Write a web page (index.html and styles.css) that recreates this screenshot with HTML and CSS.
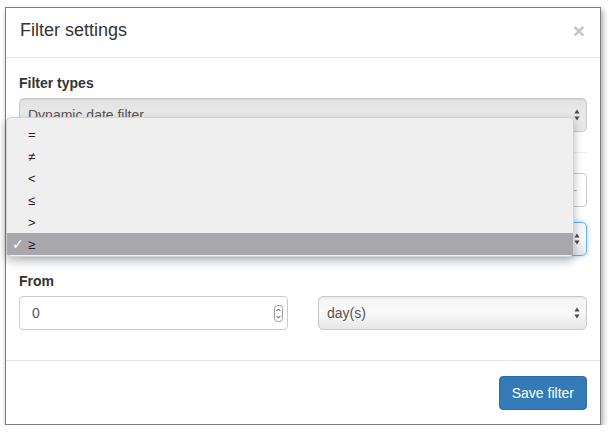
FILE: index.html
```html
<!DOCTYPE html>
<html>
<head>
<meta charset="utf-8">
<link rel="stylesheet" href="styles.css">
</head>
<body>
<div class="stage">
  <div class="modal">
    <div class="modal-header">
      <h4 class="modal-title">Filter settings</h4>
      <span class="close">×</span>
    </div>
    <div class="modal-body">
      <div class="form-group">
        <label class="lbl">Filter types</label>
        <div class="select select-flat">
          <span class="select-text">Dynamic date filter</span>
          <svg class="arrows" width="6" height="12" viewBox="0 0 6 12"><path d="M3 0.5 L5.6 4.5 H0.4 Z M3 11.5 L5.6 7.5 H0.4 Z" fill="#4a4a4a"/></svg>
        </div>
      </div>
      <hr class="sep">
      <div class="form-group">
        <div class="input"><span class="dash">-</span></div>
      </div>
      <div class="form-group">
        <div class="select select-focus">
          <span class="select-text"></span>
          <svg class="arrows" width="6" height="12" viewBox="0 0 6 12"><path d="M3 0.5 L5.6 4.5 H0.4 Z M3 11.5 L5.6 7.5 H0.4 Z" fill="#4a4a4a"/></svg>
        </div>
      </div>
      <div class="row">
        <div class="col">
          <label class="lbl">From</label>
          <div class="input input-num">
            <span class="input-text">0</span>
            <svg class="spin" width="9" height="17" viewBox="0 0 9 17"><rect x="0.5" y="0.5" width="8" height="16" rx="3" fill="#fff" stroke="#9a9a9a"/><path d="M2.6 6 L4.5 4 L6.4 6 M2.6 11 L4.5 13 L6.4 11" fill="none" stroke="#444" stroke-width="1"/></svg>
          </div>
        </div>
        <div class="col col-right">
          <div class="select select-grad">
            <span class="select-text">day(s)</span>
            <svg class="arrows" width="6" height="12" viewBox="0 0 6 12"><path d="M3 0.5 L5.6 4.5 H0.4 Z M3 11.5 L5.6 7.5 H0.4 Z" fill="#4a4a4a"/></svg>
          </div>
        </div>
      </div>
    </div>
    <div class="modal-footer">
      <button class="btn">Save filter</button>
    </div>

    <ul class="menu">
      <li class="item"><span class="check"></span>=</li>
      <li class="item"><span class="check"></span>≠</li>
      <li class="item"><span class="check"></span>&lt;</li>
      <li class="item"><span class="check"></span>≤</li>
      <li class="item"><span class="check"></span>&gt;</li>
      <li class="item item-selected"><span class="check">✓</span>≥</li>
    </ul>
  </div>
</div>
</body>
</html>
```

FILE: styles.css
```css
* { box-sizing: border-box; }

html, body {
  margin: 0;
  padding: 0;
  background: #ffffff;
  font-family: "Liberation Sans", Arial, sans-serif;
  color: #333333;
  font-size: 14px;
}

.stage {
  padding: 7px 0 0 5px;
}

.modal {
  position: relative;
  width: 596px;
  background: #ffffff;
  border: 1px solid #7c7c7c;
  box-shadow: 2px 3px 6px rgba(0, 0, 0, 0.35);
}

.modal-header {
  display: flex;
  justify-content: space-between;
  align-items: flex-start;
  padding: 12px 15px 16px 14px;
  border-bottom: 1px solid #e5e5e5;
}

.modal-title {
  margin: 0;
  font-size: 18px;
  line-height: 21px;
  font-weight: normal;
  color: #333333;
}

.close {
  font-size: 21px;
  line-height: 17px;
  font-weight: bold;
  color: #c4c4c4;
  margin-top: 2px;
}

.modal-body {
  padding: 15px 13px;
}

.form-group {
  margin-bottom: 15px;
}

.lbl {
  display: block;
  font-weight: bold;
  line-height: 20px;
  margin-bottom: 5px;
  color: #333333;
}

.select {
  position: relative;
  height: 34px;
  display: flex;
  align-items: center;
  padding: 0 8px;
  border-radius: 5px;
  border: 1px solid #c9c9c9;
  color: #555555;
  line-height: 20px;
}

.select-flat {
  background: linear-gradient(#e2e2e2, #e8e8e8 40%, #e9e9e9);
  box-shadow: inset 0 1px 1px rgba(0, 0, 0, 0.08);
}

.select-grad {
  background: linear-gradient(#f4f4f4, #fafafa 45%, #e7e7e7);
  box-shadow: inset 0 1px 2px rgba(0, 0, 0, 0.06);
}

.select-focus {
  background: linear-gradient(#f4f4f4, #fafafa 45%, #e7e7e7);
  border-color: #66afe9;
  box-shadow: 0 0 5px rgba(102, 175, 233, 0.6);
}

.select-text {
  flex: 1;
}

.arrows {
  display: block;
  margin-right: -2px;
}

.sep {
  border: 0;
  border-top: 1px solid #eeeeee;
  margin: 20px 0 20px 0;
  height: 0;
}

.input {
  height: 34px;
  display: flex;
  align-items: center;
  justify-content: flex-end;
  padding: 0 12px;
  border: 1px solid #cccccc;
  border-radius: 4px;
  background: #ffffff;
  color: #555555;
}

.dash {
  color: #b0b0b0;
  font-size: 12px;
  margin-right: -3px;
}

.input-num {
  justify-content: space-between;
  padding-right: 4px;
}

.input-text {
  line-height: 20px;
}

.spin {
  display: block;
}

.row {
  display: flex;
  gap: 30px;
  margin-bottom: 15px;
}

.col {
  flex: 0 0 269px;
}

.col-right {
  flex: 1;
  padding-top: 25px;
}

.modal-footer {
  display: flex;
  justify-content: flex-end;
  padding: 15px 13px 14px;
  border-top: 1px solid #e5e5e5;
}

.btn {
  font-family: "Liberation Sans", Arial, sans-serif;
  font-size: 14px;
  line-height: 20px;
  padding: 6px 12px;
  height: 34px;
  color: #ffffff;
  background: #337ab7;
  border: 1px solid #2e6da4;
  border-radius: 4px;
}

.menu {
  position: absolute;
  left: 0;
  top: 109px;
  width: 568px;
  height: 140px;
  margin: 0;
  padding: 5px 0 3px;
  list-style: none;
  background: #efefef;
  border: 1px solid #d2d2d2;
  border-radius: 5px;
  box-shadow: 0 4px 10px rgba(0, 0, 0, 0.28);
}

.item {
  display: flex;
  align-items: center;
  height: 22px;
  font-size: 13px;
  color: #1e1e1e;
}

.check {
  width: 21px;
  padding-left: 5px;
  font-family: "DejaVu Sans", sans-serif;
  font-size: 14px;
  font-weight: bold;
  color: #ffffff;
}

.item-selected {
  background: #a8a7ac;
}
```
